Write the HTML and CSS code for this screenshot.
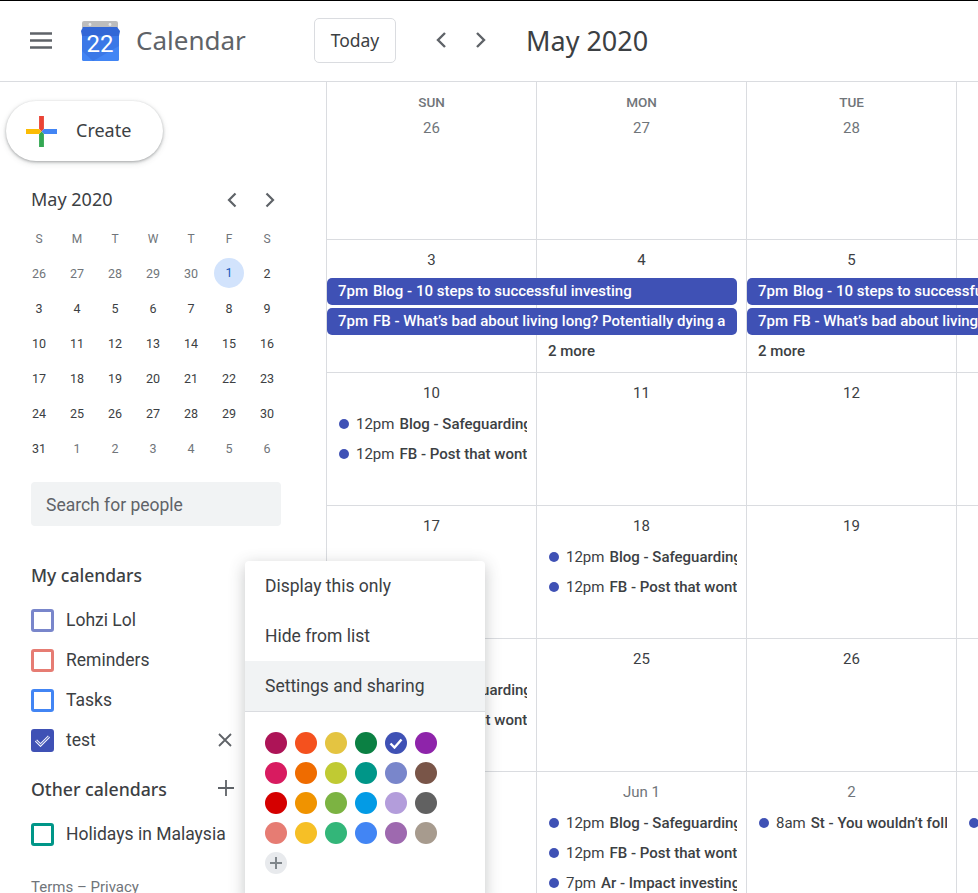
FILE: index.html
```html
<!DOCTYPE html>
<html lang="en">
<head>
    <meta charset="UTF-8">
    <title>Calendar - May 2020</title>
    <link rel="stylesheet" href="styles.css">
</head>
<body>
    <header class="topbar">
        <svg class="menu-icon" width="24" height="17" viewBox="0 0 24 17"><path d="M1 1.500h22M1 8.500h22M1 15.500h22" stroke="#5f6368" stroke-width="2.400"/></svg>
        <svg class="logo" width="42" height="42" viewBox="0 0 42 42">
            <path d="M3 8V3a2 2 0 0 1 2-2h32a2 2 0 0 1 2 2v5z" fill="#bdbdbd"/>
            <circle cx="11" cy="4.500" r="1.400" fill="#e8eaed"/>
            <circle cx="31" cy="4.500" r="1.400" fill="#e8eaed"/>
            <path d="M3 14h37v25a2 2 0 0 1-2 2H5a2 2 0 0 1-2-2z" fill="#3b78e7"/>
            <path d="M3 31l11 10H5a2 2 0 0 1-2-2zM14 41l26-15v13a2 2 0 0 1-2 2z" fill="#4285f4"/>
            <path d="M4 7h34l3 4-1 5H3l-1-5z" fill="#3367d6"/>
            <text class="logo-date" x="21" y="32" text-anchor="middle">22</text>
        </svg>
        <div class="product">Calendar</div>
        <button class="today">Today</button>
        <svg class="nav-arrow first" width="12" height="18" viewBox="0 0 12 18"><path d="M10 2L3 9l7 7" fill="none" stroke="#5f6368" stroke-width="2.400"/></svg>
        <svg class="nav-arrow" width="12" height="18" viewBox="0 0 12 18"><path d="M2 2l7 7-7 7" fill="none" stroke="#5f6368" stroke-width="2.400"/></svg>
        <div class="period">May 2020</div>
    </header>

    <div class="main">
        <aside class="sidebar">
            <button class="create">
                <svg width="31" height="31" viewBox="0 0 32 32">
                    <path d="M13.500 0h5v13.500l-2.500 2.500-2.500-2.500z" fill="#ea4335"/>
                    <path d="M32 13.500v5H18.500L16 16l2.500-2.500z" fill="#4285f4"/>
                    <path d="M13.500 32h5V18.500L16 16l-2.500 2.500z" fill="#34a853"/>
                    <path d="M0 13.500v5h13.500L16 16l-2.500-2.500z" fill="#fbbc04"/>
                </svg>
                <span class="create-label">Create</span>
            </button>

            <div class="mini-head">
                <span class="mini-title">May 2020</span>
                <svg width="12" height="16" viewBox="0 0 12 16"><path d="M9.500 1.500L3 8l6.500 6.500" fill="none" stroke="#5f6368" stroke-width="2.200"/></svg>
                <svg width="12" height="16" viewBox="0 0 12 16"><path d="M2.500 1.500L9 8l-6.500 6.500" fill="none" stroke="#5f6368" stroke-width="2.200"/></svg>
            </div>
            <div class="mini-cal">
                <span class="dow">S</span><span class="dow">M</span><span class="dow">T</span><span class="dow">W</span><span class="dow">T</span><span class="dow">F</span><span class="dow">S</span>
                <span class="muted">26</span><span class="muted">27</span><span class="muted">28</span><span class="muted">29</span><span class="muted">30</span><span class="selected">1</span><span>2</span>
                <span>3</span><span>4</span><span>5</span><span>6</span><span>7</span><span>8</span><span>9</span>
                <span>10</span><span>11</span><span>12</span><span>13</span><span>14</span><span>15</span><span>16</span>
                <span>17</span><span>18</span><span>19</span><span>20</span><span>21</span><span>22</span><span>23</span>
                <span>24</span><span>25</span><span>26</span><span>27</span><span>28</span><span>29</span><span>30</span>
                <span>31</span><span class="muted">1</span><span class="muted">2</span><span class="muted">3</span><span class="muted">4</span><span class="muted">5</span><span class="muted">6</span>
            </div>

            <div class="people-search">Search for people</div>

            <h3 class="cal-heading">My calendars</h3>
            <div class="cal-row"><span class="check c-lohzi"></span>Lohzi Lol</div>
            <div class="cal-row"><span class="check c-reminders"></span>Reminders</div>
            <div class="cal-row"><span class="check c-tasks"></span>Tasks</div>
            <div class="cal-row">
                <span class="check c-test">
                    <svg width="17" height="13" viewBox="0 0 17 13"><path d="M2 6.500l4.500 4.500L15 2.500" fill="none" stroke="#fff" stroke-width="3"/><path d="M2 6.500l4.500 4.500L15 2.500" fill="none" stroke="#6a78c8" stroke-width="1.200"/></svg>
                </span>
                test
                <svg class="row-action" width="16" height="16" viewBox="0 0 16 16"><path d="M2 2l12 12M14 2L2 14" stroke="#5f6368" stroke-width="1.800"/></svg>
            </div>

            <h3 class="cal-heading other">Other calendars
                <svg class="row-action" width="18" height="18" viewBox="0 0 18 18"><path d="M9 1v16M1 9h16" stroke="#5f6368" stroke-width="1.800"/></svg>
            </h3>
            <div class="cal-row"><span class="check c-holidays"></span>Holidays in Malaysia</div>

            <div class="terms">Terms – Privacy</div>
        </aside>

        <section class="month">
            <div class="week first">
                <div class="day"><span class="dow-name">SUN</span><span class="date muted-date">26</span></div>
                <div class="day"><span class="dow-name">MON</span><span class="date muted-date">27</span></div>
                <div class="day"><span class="dow-name">TUE</span><span class="date muted-date">28</span></div>
            </div>
            <div class="week">
                <div class="day date">3</div>
                <div class="day date">4</div>
                <div class="day date">5</div>
                <div class="chip span2 row2"><span class="chip-time">7pm</span>Blog - 10 steps to successful investing</div>
                <div class="chip span2b row2"><span class="chip-time">7pm</span>Blog - 10 steps to successful investing</div>
                <div class="chip span2 row3"><span class="chip-time">7pm</span>FB - What’s bad about living long? Potentially dying a</div>
                <div class="chip span2b row3"><span class="chip-time">7pm</span>FB - What’s bad about living long? Potentially dying a</div>
                <div class="more col2 row4">2 more</div>
                <div class="more col3 row4">2 more</div>
            </div>
            <div class="week">
                <div class="day date">10</div>
                <div class="day date">11</div>
                <div class="day date">12</div>
                <div class="event col1 row2"><i class="dot"></i><span>12pm</span><b>Blog - Safeguarding your wealth</b></div>
                <div class="event col1 row3"><i class="dot"></i><span>12pm</span><b>FB - Post that wont go away</b></div>
            </div>
            <div class="week">
                <div class="day date">17</div>
                <div class="day date">18</div>
                <div class="day date">19</div>
                <div class="event col2 row2"><i class="dot"></i><span>12pm</span><b>Blog - Safeguarding your wealth</b></div>
                <div class="event col2 row3"><i class="dot"></i><span>12pm</span><b>FB - Post that wont go away</b></div>
            </div>
            <div class="week">
                <div class="day date">24</div>
                <div class="day date">25</div>
                <div class="day date">26</div>
                <div class="event col1 row2"><i class="dot"></i><span>12pm</span><b>Blog - Safeguarding your wealth</b></div>
                <div class="event col1 row3"><i class="dot"></i><span>12pm</span><b>FB - Post that wont go away</b></div>
            </div>
            <div class="week">
                <div class="day date">31</div>
                <div class="day date muted-date">Jun 1</div>
                <div class="day date muted-date">2</div>
                <div class="event col2 row2"><i class="dot"></i><span>12pm</span><b>Blog - Safeguarding your wealth</b></div>
                <div class="event col2 row3"><i class="dot"></i><span>12pm</span><b>FB - Post that wont go away</b></div>
                <div class="event col2 row4"><i class="dot"></i><span>7pm</span><b>Ar - Impact investing today</b></div>
                <div class="event col3 row2"><i class="dot"></i><span>8am</span><b>St - You wouldn’t follow this</b></div>
                <div class="event col4 row2"><i class="dot"></i></div>
            </div>
        </section>
    </div>

    <div class="popup">
        <div class="popup-item">Display this only</div>
        <div class="popup-item">Hide from list</div>
        <div class="popup-item active">Settings and sharing</div>
        <div class="swatches">
            <i style="background:#ad1457"></i><i style="background:#f4511e"></i><i style="background:#e4c441"></i><i style="background:#0b8043"></i>
            <i class="picked" style="background:#3f51b5"><svg width="14" height="11" viewBox="0 0 14 11"><path d="M1.500 5.500l4 4 7-8" fill="none" stroke="#fff" stroke-width="2.400"/></svg></i>
            <i style="background:#8e24aa"></i>
            <i style="background:#d81b60"></i><i style="background:#ef6c00"></i><i style="background:#c0ca33"></i><i style="background:#009688"></i><i style="background:#7986cb"></i><i style="background:#795548"></i>
            <i style="background:#d50000"></i><i style="background:#f09300"></i><i style="background:#7cb342"></i><i style="background:#039be5"></i><i style="background:#b39ddb"></i><i style="background:#616161"></i>
            <i style="background:#e67c73"></i><i style="background:#f6bf26"></i><i style="background:#33b679"></i><i style="background:#4285f4"></i><i style="background:#9e69af"></i><i style="background:#a79b8e"></i>
            <i class="add-color"><svg width="12" height="12" viewBox="0 0 12 12"><path d="M6 0v12M0 6h12" stroke="#80868b" stroke-width="2"/></svg></i>
        </div>
    </div>
</body>
</html>
```

FILE: styles.css
```css
* {
    box-sizing: border-box;
}

body {
    margin: 0;
    height: 893px;
    overflow: hidden;
    font-family: Roboto, Arial, sans-serif;
    color: #3c4043;
    background: #fff;
    border-top: 1px solid #000;
}

.topbar {
    display: flex;
    align-items: center;
    height: 81px;
    padding-bottom: 2px;
    border-bottom: 1px solid #dadce0;
}

.menu-icon {
    margin-left: 29px;
}

.logo {
    margin: 2px 0 0 26px;
}

.logo-date {
    font-family: Roboto, sans-serif;
    font-size: 24px;
    fill: #fff;
}

.product {
    margin-left: 15px;
    width: 178px;
    font-family: "Noto Sans", sans-serif;
    font-size: 26px;
    color: #5f6368;
}

.today {
    width: 82px;
    height: 45px;
    padding: 0;
    font-family: "Noto Sans", sans-serif;
    font-size: 17.500px;
    color: #3c4043;
    background: #fff;
    border: 1px solid #dadce0;
    border-radius: 5px;
}

.nav-arrow {
    margin-left: 28px;
}

.nav-arrow.first {
    margin-left: 39px;
}

.period {
    margin-left: 39px;
    font-family: "Noto Sans", sans-serif;
    font-size: 27px;
    color: #3c4043;
}

.main {
    display: flex;
    height: 811px;
}

/* left column */
.sidebar {
    flex: none;
    width: 327px;
    padding-top: 19px;
    border-right: 1px solid #dadce0;
}

.create {
    display: flex;
    align-items: center;
    gap: 19px;
    width: 157px;
    height: 60px;
    margin-left: 6px;
    padding: 0 0 0 20px;
    font-family: "Noto Sans", sans-serif;
    font-size: 18px;
    color: #3c4043;
    background: #fff;
    border: none;
    border-radius: 30px;
    box-shadow: 0 1px 3px rgba(60, 64, 67, 0.4), 0 2px 6px rgba(60, 64, 67, 0.15);
}

.create-label {
    margin-bottom: 2px;
}

.mini-head {
    display: flex;
    align-items: center;
    margin: 27px 0 0 31px;
    height: 24px;
}

.mini-title {
    width: 195px;
    margin-bottom: 2px;
    font-family: "Noto Sans", sans-serif;
    font-size: 18px;
}

.mini-head svg + svg {
    margin-left: 26px;
}

.mini-cal {
    display: grid;
    grid-template-columns: repeat(7, 38px);
    grid-template-rows: 34px;
    grid-auto-rows: 35px;
    margin: 10px 0 0 20px;
    font-size: 12.500px;
    text-align: center;
    line-height: 35px;
}

.mini-cal .dow {
    color: #70757a;
    font-size: 12px;
}

.mini-cal .muted {
    color: #70757a;
}

.mini-cal .selected {
    width: 30px;
    height: 30px;
    margin: 2px 0 0 4px;
    line-height: 30px;
    color: #185abc;
    background: #d2e3fc;
    border-radius: 50%;
}

.people-search {
    width: 250px;
    height: 44px;
    margin: 16px 0 0 31px;
    padding-left: 15px;
    font-size: 17.500px;
    line-height: 46px;
    color: #5f6368;
    background: #f1f3f4;
    border-radius: 4px;
}

.cal-heading {
    position: relative;
    margin: 36px 0 12px 31px;
    font-family: "Noto Sans", sans-serif;
    font-size: 17.500px;
    font-weight: 500;
    line-height: 26px;
}

.cal-heading.other {
    margin-top: 16px;
    margin-bottom: 12px;
    width: 204px;
    font-size: 17.700px;
}

.cal-row {
    display: flex;
    align-items: center;
    width: 202px;
    height: 40px;
    margin-left: 31px;
    font-size: 17.500px;
    color: #3c4043;
    white-space: nowrap;
}

.check {
    display: flex;
    align-items: center;
    justify-content: center;
    flex: none;
    width: 23px;
    height: 23px;
    margin-right: 12px;
    border: 3px solid;
    border-radius: 3px;
}

.c-lohzi { border-color: #7986cb; }
.c-reminders { border-color: #e67c73; }
.c-tasks { border-color: #4285f4; }
.c-test { border-color: #3f51b5; background: #3f51b5; }
.c-holidays { border-color: #009688; }

.row-action {
    margin-left: auto;
}

.cal-heading .row-action {
    position: absolute;
    right: 0;
    top: 3px;
}

.terms {
    margin: 24px 0 0 31px;
    font-size: 15px;
    color: #70757a;
}

/* month grid */
.month {
    flex: none;
    width: 840px;
}

.week {
    display: grid;
    grid-template-columns: repeat(4, 210px);
    grid-template-rows: 36px;
    grid-auto-rows: 30px;
    height: 133px;
    border-bottom: 1px solid #dadce0;
    background: repeating-linear-gradient(90deg, transparent 0 209px, #dadce0 209px 210px);
}

.week.first {
    grid-template-rows: 1fr;
    height: 158px;
}

.day {
    grid-row: 1;
    text-align: center;
    padding-right: 1px;
    white-space: nowrap;
}

.date {
    display: block;
    padding-top: 11px;
    font-size: 15px;
    line-height: 18px;
    color: #3c4043;
}

.first .date {
    padding-top: 9px;
}

.muted-date {
    color: #70757a;
}

.dow-name {
    display: block;
    padding-top: 13px;
    font-size: 13.500px;
    font-weight: 500;
    line-height: 15px;
    color: #70757a;
}

.chip {
    align-self: center;
    height: 27px;
    margin-right: 10px;
    padding-left: 11px;
    overflow: hidden;
    font-size: 15px;
    font-weight: 500;
    line-height: 27px;
    white-space: nowrap;
    color: #fff;
    background: #3f51b5;
    border-radius: 5px;
}

.chip-time {
    margin-right: 5px;
}

.more {
    padding-left: 11px;
    font-size: 15px;
    font-weight: 500;
    line-height: 31px;
}

.event {
    display: flex;
    align-items: center;
    margin-right: 10px;
    padding-left: 12px;
    overflow: hidden;
    font-size: 15px;
    line-height: 28px;
    white-space: nowrap;
}

.event b {
    margin-left: 5px;
    font-weight: 500;
}

.dot {
    flex: none;
    width: 10px;
    height: 10px;
    margin-right: 7px;
    background: #3f51b5;
    border-radius: 50%;
}

.col1 { grid-column: 1; }
.col2 { grid-column: 2; }
.col3 { grid-column: 3; }
.col4 { grid-column: 4; }
.span2 { grid-column: 1 / span 2; }
.span2b { grid-column: 3 / span 2; }
.row2 { grid-row: 2; }
.row3 { grid-row: 3; }
.row4 { grid-row: 4; }

/* calendar options menu */
.popup {
    position: absolute;
    left: 245px;
    top: 561px;
    width: 240px;
    height: 340px;
    background: #fff;
    border-radius: 4px;
    box-shadow: 0 4px 16px rgba(60, 64, 67, 0.3);
}

.popup-item {
    height: 50px;
    padding-left: 20px;
    font-size: 17.500px;
    line-height: 50px;
    color: #3c4043;
}

.popup-item.active {
    background: #f1f3f4;
    height: 51px;
    border-bottom: 1px solid #dadce0;
}

.swatches {
    display: grid;
    grid-template-columns: repeat(6, 22px);
    gap: 8px;
    padding: 20px 0 0 20px;
}

.swatches i {
    display: flex;
    align-items: center;
    justify-content: center;
    width: 22px;
    height: 22px;
    border-radius: 50%;
}

.swatches .add-color {
    background: #e8eaed;
}
```
